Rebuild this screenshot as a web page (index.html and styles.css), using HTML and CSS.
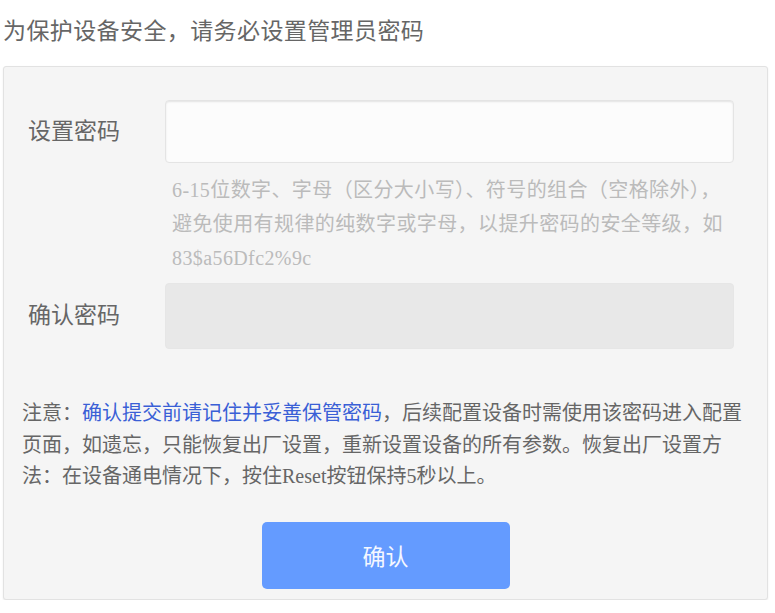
FILE: index.html
```html
<!DOCTYPE html>
<html lang="zh-CN">
<head>
    <meta charset="UTF-8">
    <meta name="viewport" content="width=device-width, initial-scale=1.0">
    <title>设置管理员密码</title>
    <link rel="stylesheet" href="styles.css">
</head>
<body>

<div class="page">
    <p class="intro">为保护设备安全，请务必设置管理员密码</p>

    <div class="panel">
        <div class="field">
            <label for="pwd">设置密码</label>
            <input type="password" id="pwd" class="box">
        </div>
        <p class="hint">6-15位数字、字母（区分大小写）、符号的组合（空格除外），避免使用有规律的纯数字或字母，以提升密码的安全等级，如83$a56Dfc2%9c</p>

        <div class="field">
            <label for="pwd2">确认密码</label>
            <input type="password" id="pwd2" class="box box-off" disabled>
        </div>

        <p class="notice">注意：<span class="strong">确认提交前请记住并妥善保管密码</span>，后续配置设备时需使用该密码进入配置页面，如遗忘，只能恢复出厂设置，重新设置设备的所有参数。恢复出厂设置方法：在设备通电情况下，按住Reset按钮保持5秒以上。</p>

        <div class="actions">
            <button class="submit">确认</button>
        </div>
    </div>
</div>

</body>
</html>
```

FILE: styles.css
```css
body {
    margin: 0;
    background-color: #fff;
    font-family: "Liberation Serif", "Noto Sans CJK SC", serif;
    color: #666;
}
.page {
    width: 765px;
    padding: 0 3px;
}
.intro {
    margin: 0 0 18px;
    padding-top: 16px;
    font-size: 23px;
    line-height: 32px;
    letter-spacing: 0.4px;
    color: #666;
}
.panel {
    background-color: #f5f5f5;
    border: 1px solid #e2e2e2;
    border-radius: 3px;
    box-shadow: 0 1px 2px rgba(0, 0, 0, 0.08);
    padding: 33px 0 10px;
}
.field {
    display: flex;
    align-items: center;
}
.field label {
    flex-shrink: 0;
    width: 161px;
    padding-left: 24px;
    box-sizing: border-box;
    font-size: 23px;
    line-height: 28px;
    color: #666;
}
.box {
    flex-shrink: 0;
    width: 569px;
    height: 63px;
    box-sizing: border-box;
    margin: 0;
    padding: 0 12px;
    border: 1px solid #e4e4e4;
    border-radius: 4px;
    background-color: #fcfcfc;
    box-shadow: inset 0 1px 2px rgba(0, 0, 0, 0.1);
    outline: none;
}
.box-off {
    height: 66px;
    border-color: #e6e6e6;
    background-color: #e8e8e8;
    box-shadow: none;
}
.hint {
    width: 566px;
    margin: 10px 0 8px 168px;
    font-size: 20px;
    line-height: 34px;
    letter-spacing: 0.4px;
    color: #bbb;
}
.notice {
    width: 725px;
    margin: 49px 0 0 18px;
    font-size: 20px;
    line-height: 31.5px;
    color: #666;
}
.notice .strong {
    color: #3a5fd6;
}
.actions {
    display: flex;
    justify-content: center;
    margin-top: 29px;
}
.submit {
    width: 248px;
    height: 67px;
    border: none;
    border-radius: 5px;
    background-color: #649bff;
    color: #f4f7ff;
    font-family: "Noto Sans CJK SC", sans-serif;
    font-size: 23px;
    cursor: pointer;
}
```
